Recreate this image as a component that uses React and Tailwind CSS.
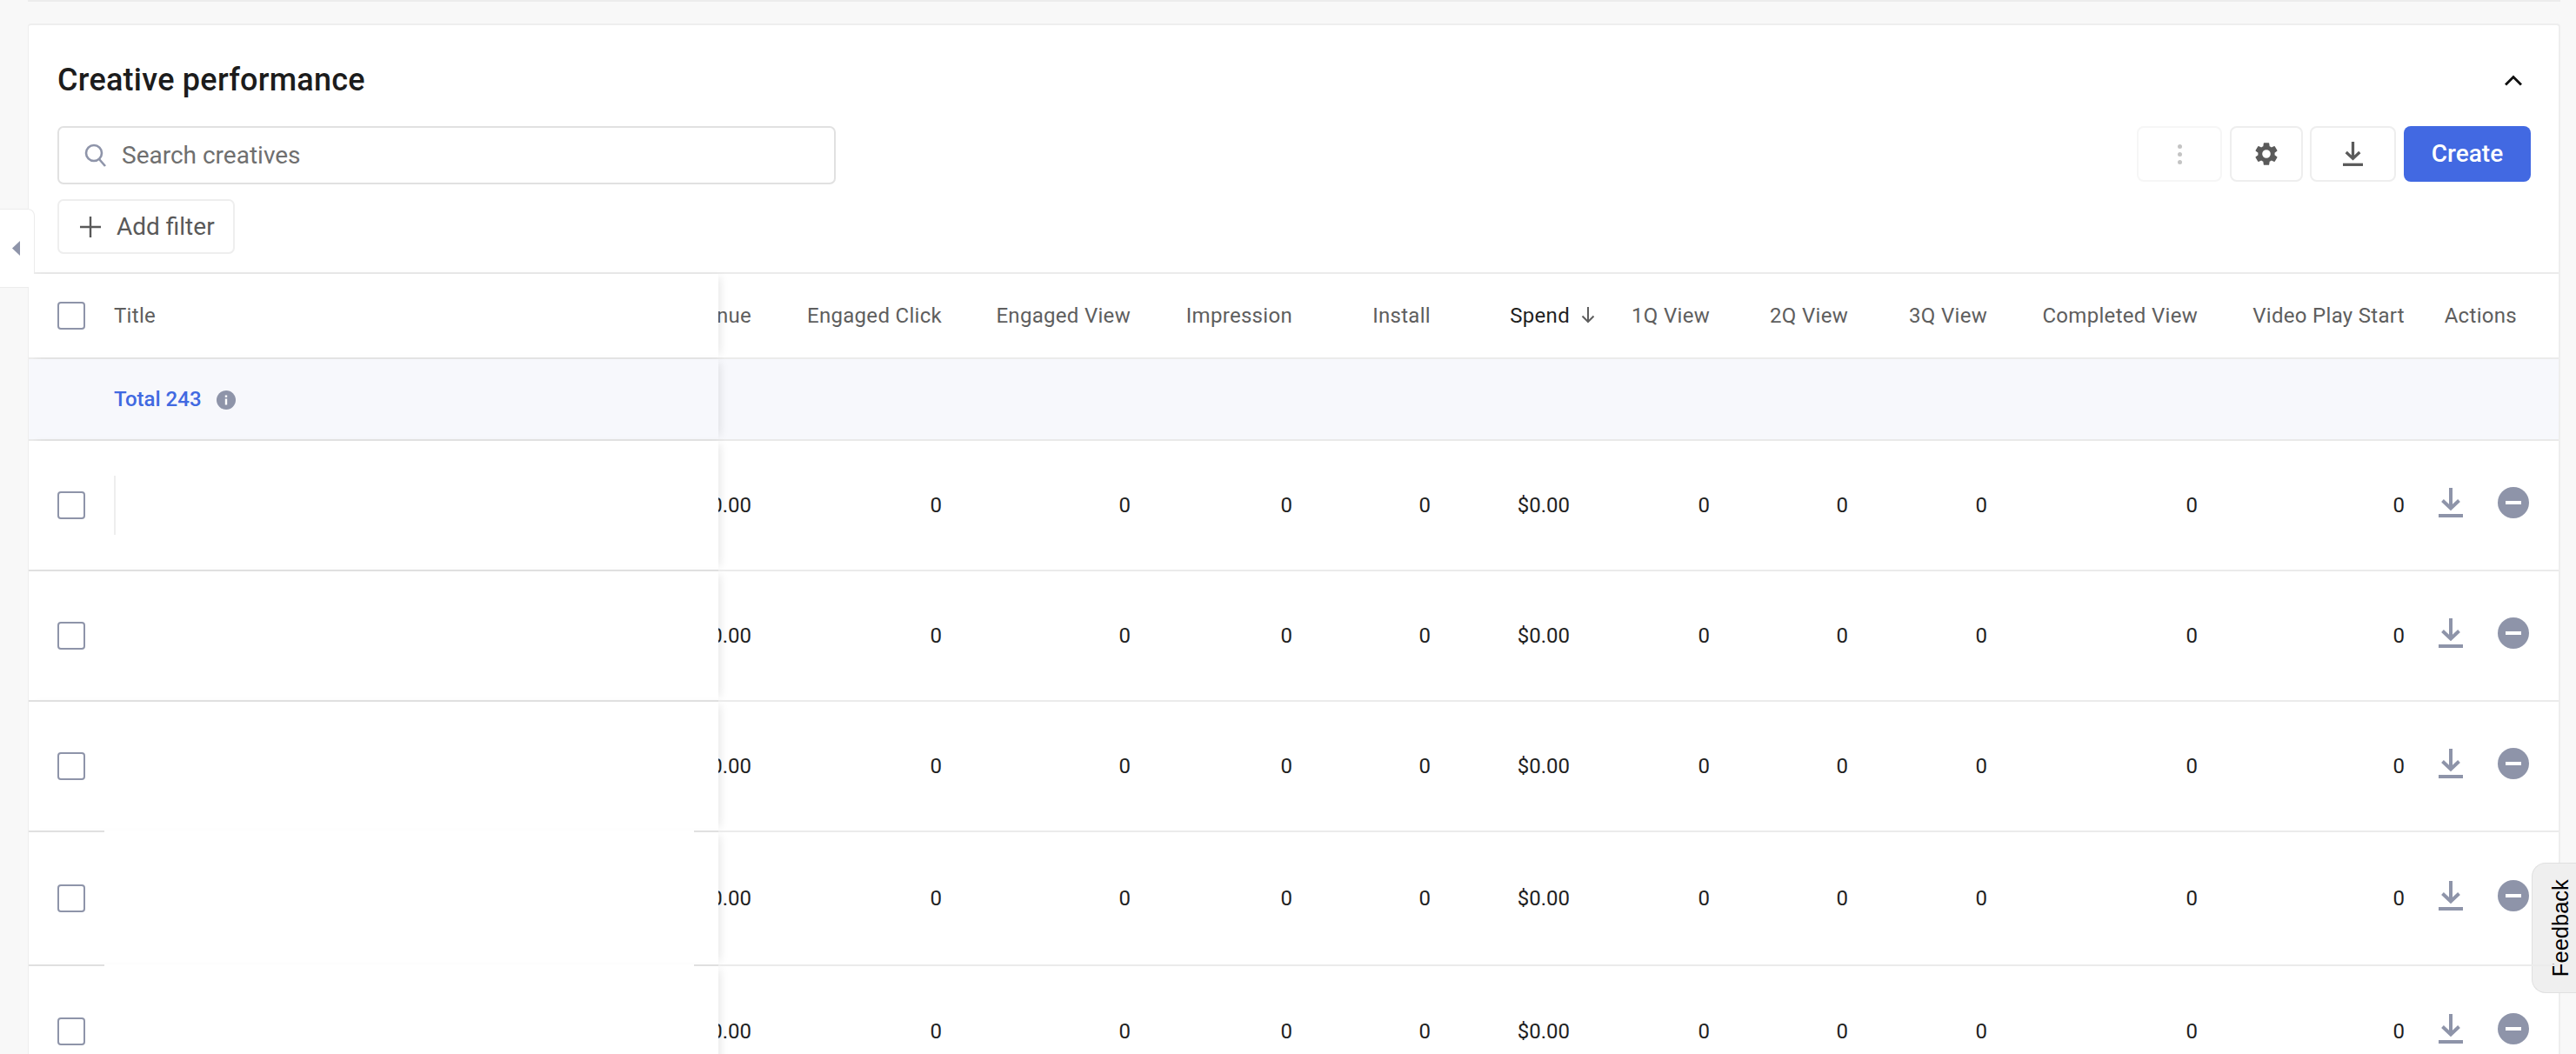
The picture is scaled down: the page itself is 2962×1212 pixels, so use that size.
import React from 'react'

const columns = [
  { label: 'Revenue', value: '$0.00', width: 'w-[70px]' },
  { label: 'Engaged Click', value: '0', width: 'w-[219px]' },
  { label: 'Engaged View', value: '0', width: 'w-[217px]' },
  { label: 'Impression', value: '0', width: 'w-[186px]' },
  { label: 'Install', value: '0', width: 'w-[159px]' },
  { label: 'Spend', value: '$0.00', width: 'w-[160px]', sorted: true },
  { label: '1Q View', value: '0', width: 'w-[161px]' },
  { label: '2Q View', value: '0', width: 'w-[159px]' },
  { label: '3Q View', value: '0', width: 'w-[160px]' },
  { label: 'Completed View', value: '0', width: 'w-[242px]' },
  { label: 'Video Play Start', value: '0', width: 'w-[238px]' },
]

// row height, plus whether the divider below is cut by the blank thumbnail area
const rows = [
  { height: 'h-[148px]', line: true },
  { height: 'h-[148px]', line: true },
  { height: 'h-[148px]', line: false },
  { height: 'h-[152px]', line: false },
  { height: 'h-[150px]', line: true },
]

function DownloadIcon({ className }) {
  return (
    <svg viewBox="0 0 28 34" className={className} fill="none" stroke="currentColor" strokeWidth="4">
      <path d="M14 0v23M4.500 14.500 14 23.500l9.500-9" />
      <path d="M0 32h28" />
    </svg>
  )
}

function Checkbox() {
  return <div className="w-8 h-8 shrink-0 rounded border-2 border-[#8e94a9] bg-white" />
}

function Cell({ col, children }) {
  return (
    <div className={`${col.width} shrink-0 pr-8 flex items-center justify-end whitespace-nowrap`}>
      {children}
    </div>
  )
}

function HeaderRow() {
  return (
    <div className="flex h-[98px] border-b-2 border-[#ebebeb] tracking-[0.3px]">
      <div className="w-[793px] shrink-0 bg-white flex items-center pl-[33px] z-10 shadow-[6px_0_10px_-4px_rgba(0,0,0,0.1)]">
        <Checkbox />
        <span className="ml-[33px] text-[#5e5e5e]">Title</span>
      </div>
      {columns.map(col => (
        <Cell key={col.label} col={col}>
          <span className={`relative ${col.sorted ? 'text-[#1f1f1f]' : 'text-[#5e5e5e]'}`}>
            {col.label}
            {col.sorted && (
              <svg viewBox="0 0 18 20" className="absolute left-[calc(100%+12px)] top-[7px] w-[18px] h-[20px] text-[#5e5e5e]" fill="none" stroke="currentColor" strokeWidth="2">
                <path d="M9 1v17M2.500 11.500 9 18l6.500-6.500" />
              </svg>
            )}
          </span>
        </Cell>
      ))}
      <div className="flex-1 flex items-center justify-end pr-[48px] text-[#5e5e5e]">Actions</div>
    </div>
  )
}

function TotalRow() {
  return (
    <div className="flex h-[94px] bg-[#f7f8fc] border-b-2 border-[#e9e9e9]">
      <div className="w-[793px] shrink-0 flex items-center pl-[98px] z-10 bg-[#f7f8fc] shadow-[6px_0_10px_-4px_rgba(0,0,0,0.1)]">
        <span className="text-[#4169e1] font-medium">Total 243</span>
        <svg viewBox="0 0 22 22" className="ml-[17px] mt-[2px] w-[22px] h-[22px]">
          <circle cx="11" cy="11" r="11" fill="#8e94a9" />
          <rect x="9.800" y="9.500" width="2.400" height="7" fill="#fff" />
          <rect x="9.800" y="5.500" width="2.400" height="2.400" fill="#fff" />
        </svg>
      </div>
    </div>
  )
}

function BodyRow({ row, index }) {
  return (
    <>
      <div className={`flex ${row.height} text-[#1f1f1f]`}>
        <div className="w-[793px] shrink-0 bg-white flex items-center pl-[33px] z-10 shadow-[6px_0_10px_-4px_rgba(0,0,0,0.1)]">
          <Checkbox />
          {index === 0 && <div className="ml-[33px] w-[2px] h-[68px] bg-[#eeeeee]" />}
        </div>
        {columns.map(col => (
          <Cell key={col.label} col={col}>
            {col.value}
          </Cell>
        ))}
        <div className="flex-1 flex items-center pl-[7px] gap-[40px] pb-[6px]">
          <DownloadIcon className="w-7 h-[34px] text-[#8e94a9]" />
          <div className="w-9 h-9 rounded-full bg-[#8e94a9] flex items-center justify-center">
            <div className="w-[18px] h-[4px] bg-white" />
          </div>
        </div>
      </div>
      {row.line ? (
        <div className="h-[2px] flex relative z-20">
          <div className="w-[793px] bg-[#e0e0e0]" />
          <div className="flex-1 bg-[#ebebeb]" />
        </div>
      ) : (
        <div className="h-[2px] flex relative z-20">
          <div className="w-[87px] bg-[#e0e0e0]" />
          <div className="w-[678px] bg-white" />
          <div className="w-[28px] bg-[#e0e0e0]" />
          <div className="flex-1 bg-[#ebebeb]" />
        </div>
      )}
    </>
  )
}

export default function App() {
  return (
    <div className="relative h-[1212px] overflow-hidden bg-[#f8f8f8] font-['Roboto',sans-serif] text-[24px]">
      <div className="ml-[32px] mr-[18px] h-[2px] bg-[#ececec]" />

      <div className="ml-[32px] mr-[18px] mt-[25px] bg-white border-2 border-l border-[#eeeeee] border-b-0 rounded-t-[4px]">
        <div className="h-[286px] pl-[33px] pr-[32px] border-b-2 border-[#ebebeb]">
          <div className="flex items-center justify-between pt-[43px]">
            <h2 className="text-[36px] leading-[40px] font-medium tracking-[0.25px] text-[#1c1c1c]">Creative performance</h2>
            <svg viewBox="0 0 20 13" className="w-5 h-[13px] mr-[10px] text-[#111111]" fill="none" stroke="currentColor" strokeWidth="3">
              <path d="M1 11.500 10 2.500l9 9" />
            </svg>
          </div>

          <div className="flex justify-between items-start mt-[33px]">
            <div>
              <div className="w-[895px] h-[67px] rounded-[7px] border-2 border-[#e1e1e1] flex items-center pl-[29px]">
                <svg viewBox="0 0 26 28" className="w-[26px] h-[28px] text-[#8e94a9]" fill="none" stroke="currentColor" strokeWidth="2.600">
                  <circle cx="11" cy="11" r="9" />
                  <path d="m17 18 7 8" />
                </svg>
                <span className="ml-[17px] text-[28px] text-[#6f6f6f]">Search creatives</span>
              </div>
              <div className="mt-[17px] w-[204px] h-[63px] rounded-[7px] border-2 border-[#eeeeee] flex items-center pl-[24px]">
                <svg viewBox="0 0 24 24" className="w-6 h-6 text-[#595959]" fill="none" stroke="currentColor" strokeWidth="2.400">
                  <path d="M12 0v24M0 12h24" />
                </svg>
                <span className="ml-[18px] text-[28px] text-[#595959]">Add filter</span>
              </div>
            </div>

            <div className="flex items-center h-16">
              <div className="w-[98px] h-16 rounded-lg border-2 border-[#f6f6f6] flex flex-col items-center justify-center gap-[4px]">
                <div className="w-[5px] h-[5px] rounded-full bg-[#c4c4c4]" />
                <div className="w-[5px] h-[5px] rounded-full bg-[#c4c4c4]" />
                <div className="w-[5px] h-[5px] rounded-full bg-[#c4c4c4]" />
              </div>
              <div className="ml-[9px] w-[84px] h-16 rounded-lg border-2 border-[#eeeeee] flex items-center justify-center">
                <svg viewBox="0 0 24 24" className="w-[32px] h-[32px] text-[#5a5a5a]" fill="currentColor">
                  <path d="M19.140 12.940c.040-.300.060-.610.060-.940 0-.320-.020-.640-.070-.940l2.030-1.580a.490.490 0 0 0 .120-.610l-1.920-3.320a.490.490 0 0 0-.590-.220l-2.390.960c-.500-.380-1.030-.700-1.620-.940l-.360-2.540a.480.480 0 0 0-.480-.410h-3.840a.470.470 0 0 0-.470.410l-.360 2.540c-.590.240-1.130.570-1.620.940l-2.390-.960a.480.480 0 0 0-.590.220L2.740 8.870a.480.480 0 0 0 .120.610l2.030 1.580c-.050.300-.090.630-.090.940s.020.640.070.940l-2.030 1.580a.490.490 0 0 0-.120.610l1.920 3.320c.120.220.370.290.590.220l2.390-.960c.500.380 1.030.700 1.620.940l.360 2.540c.050.240.240.410.480.410h3.840c.240 0 .440-.170.470-.410l.360-2.540c.590-.240 1.130-.560 1.620-.940l2.390.960c.220.080.470 0 .590-.220l1.920-3.320a.480.480 0 0 0-.120-.610l-2.010-1.580zM12 15.600A3.610 3.610 0 0 1 8.400 12 3.610 3.610 0 0 1 12 8.400a3.610 3.610 0 0 1 3.600 3.600 3.610 3.610 0 0 1-3.600 3.600z" />
                </svg>
              </div>
              <div className="ml-[8px] w-[99px] h-16 rounded-lg border-2 border-[#eeeeee] flex items-center justify-center">
                <DownloadIcon className="w-[23px] h-[28px] text-[#5a5a5a]" />
              </div>
              <div className="ml-[9px] w-[146px] h-16 rounded-lg bg-[#4269e2] text-white text-[28px] font-medium flex items-center justify-center">
                Create
              </div>
            </div>
          </div>
        </div>

        <HeaderRow />
        <TotalRow />
        {rows.map((row, i) => (
          <BodyRow key={i} row={row} index={i} />
        ))}
      </div>

      {/* collapse tab */}
      <div className="absolute left-0 top-[240px] w-[40px] h-[91px] bg-white border border-l-0 border-[#ececec] rounded-tr-lg flex items-center pl-[14px]">
        <svg viewBox="0 0 9 17" className="w-[9px] h-[17px] text-[#8e94a9]" fill="currentColor">
          <path d="M9 0v17L0 8.500z" />
        </svg>
      </div>

      {/* feedback tab */}
      <div className="absolute right-0 top-[992px] w-[51px] h-[150px] bg-[#efefef] border border-r-0 border-[#e0e0e0] rounded-l-[16px] flex items-center justify-center pl-[13px]">
        <span className="-rotate-90 whitespace-nowrap font-['Liberation_Sans',sans-serif] text-[25.500px] text-black">Feedback</span>
      </div>
    </div>
  )
}
